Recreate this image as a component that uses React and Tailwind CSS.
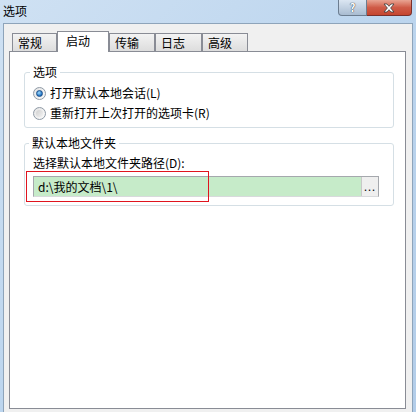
import React from "react";

const FONT = { fontFamily: '"Noto Sans CJK SC", "Noto Sans", sans-serif' };

function Radio({ checked }) {
  return (
    <span className="w-[13px] h-[13px] rounded-full border border-[#8f9aa6] bg-gradient-to-br from-[#e4e4e4] to-[#fafafa] flex items-center justify-center shrink-0">
      {checked ? (
        <span className="w-[7px] h-[7px] rounded-full bg-[radial-gradient(circle_at_40%_35%,#9fdcff,#1d6fc0_70%)] border border-[#1b4f8a]" />
      ) : (
        <span className="w-[7px] h-[7px] rounded-full bg-gradient-to-br from-[#d0d0d0] to-[#f2f2f2]" />
      )}
    </span>
  );
}

function Tab({ label, active, w }) {
  if (active) {
    return (
      <div
        className={`${w} h-[21px] -mb-px relative z-10 bg-white border border-b-0 border-[#898c95] pl-[8px] text-[12px] leading-[18px] text-black`}
      >
        {label}
      </div>
    );
  }
  return (
    <div
      className={`${w} h-[18px] bg-gradient-to-b from-[#f3f3f3] to-[#dddddd] border border-b-0 border-[#898c95] pl-[5px] text-[12px] leading-[18px] text-black`}
    >
      {label}
    </div>
  );
}

export default function App() {
  return (
    <div
      className="w-[416px] h-[412px] flex flex-col bg-gradient-to-br from-[#cfe1f3] via-[#bcd5ee] to-[#b3cde9] overflow-hidden"
      style={FONT}
    >
      {/* title bar */}
      <div className="h-[23px] flex items-start justify-between shrink-0">
        <div className="pl-[3px] pt-[3px] text-[12px] leading-[16px] text-black">选项</div>
        <div className="flex mr-[4px]">
          <div className="w-[29px] h-[16px] rounded-bl-[4px] border border-t-0 border-[#6c7d90] bg-gradient-to-b from-[#dbe6f2] to-[#a9bcd1] flex items-center justify-center text-white font-bold text-[11px] leading-[15px] [text-shadow:0_0_1px_#2f3b48,0_0_1px_#2f3b48]">
            ?
          </div>
          <div className="w-[45px] h-[16px] rounded-br-[4px] border border-t-0 border-l-0 border-[#7a2f2a] bg-gradient-to-b from-[#e8a493] via-[#cf5b47] to-[#c5452f] flex items-center justify-center">
            <svg width="12" height="10" viewBox="0 0 12 10">
              <path
                d="M1 1h3l2 2.3L8 1h3L7.6 5 11 9H8L6 6.7 4 9H1l3.4-4z"
                fill="#fff"
                stroke="#3b3b3b"
                strokeWidth="0.8"
              />
            </svg>
          </div>
        </div>
      </div>

      {/* client area */}
      <div className="flex-1 mx-[3px] bg-[#f0f0f0] border-t border-x border-[#8ea4ba] pl-[5px] pr-[6px] pt-[7px] pb-[3px] flex flex-col">
        <div className="h-[20px] flex items-end pl-[3px]">
          <Tab label="常规" w="w-[45px]" />
          <Tab label="启动" w="w-[52px]" active />
          <Tab label="传输" w="w-[46px]" />
          <Tab label="日志" w="w-[47px]" />
          <Tab label="高级" w="w-[46px]" />
        </div>

        <div className="flex-1 bg-white border border-[#898c95] pl-[14px] pr-[11px] pt-[13px] text-[12px] text-black">
          <fieldset className="border border-[#d5dfe5] rounded-[3px] pl-[8px] pb-[4px]">
            <legend className="-ml-[3px] px-[3px] leading-[14px]">选项</legend>
            <div className="pt-[4px]">
              <div className="h-[20px] flex items-center gap-[4px]">
                <Radio checked />
                <span className="leading-[14px]">打开默认本地会话(L)</span>
              </div>
              <div className="h-[20px] flex items-center gap-[4px]">
                <Radio />
                <span className="leading-[14px]">重新打开上次打开的选项卡(R)</span>
              </div>
            </div>
          </fieldset>

          <fieldset className="mt-[8px] border border-[#d5dfe5] rounded-[3px] pl-[8px] pr-[14px] pb-[8px]">
            <legend className="-ml-[4px] px-[3px] leading-[14px]">默认本地文件夹</legend>
            <div className="pt-[6px] leading-[14px]">选择默认本地文件夹路径(D):</div>
            <div className="relative mt-[6px] h-[21px] flex border border-[#a5a8ad] border-b-[#d8dadc]">
              <div className="flex-1 bg-[#c6ebc9] pl-[4px] leading-[19px]">d:\我的文档\1\</div>
              <div className="w-[17px] bg-[#efefef] border-l border-[#c8c8c8] leading-[19px] text-[11px] text-center tracking-[1px]">
                ...
              </div>
              <div className="absolute left-[-8px] top-[-6px] w-[183px] h-[31px] border border-[#e0141e]" />
            </div>
          </fieldset>
        </div>
      </div>
    </div>
  );
}
